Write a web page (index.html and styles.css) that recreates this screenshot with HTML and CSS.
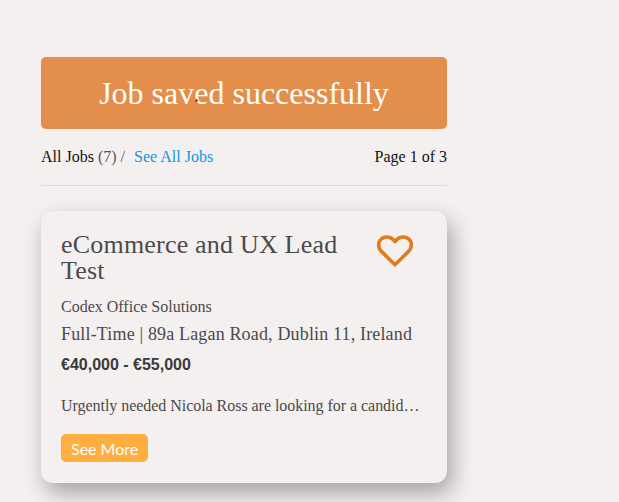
FILE: index.html
```html
<!DOCTYPE html>
<html lang="en">
<head>
  <meta charset="UTF-8" />
  <title>Jobs</title>
  <meta name="viewport" content="width=device-width, initial-scale=1" />
  <link rel="stylesheet" href="styles.css">
</head>
<body>
  <div class="container">
    <div class="alert">
      Job saved successfully
      <span class="alert-dot"></span>
    </div>

    <div class="list-head">
      <div>All Jobs <span class="muted">(7) /</span> <a class="all-link" href="#">See All Jobs</a></div>
      <div>Page 1 of 3</div>
    </div>

    <div class="job-card">
      <div class="job-top">
        <h2 class="job-title">eCommerce and UX Lead Test</h2>
        <svg class="heart" viewBox="0 0 36 32" width="36" height="32" aria-hidden="true">
          <path d="M18 29.8 L4.4 16.4 C0.6 12.4 0.8 7 4.2 4 C7.8 1 13.4 1.4 16.4 4.8 L18 6.6 L19.6 4.8 C22.6 1.4 28.2 1 31.8 4 C35.2 7 35.4 12.4 31.6 16.4 Z" fill="none" stroke="#e07b1f" stroke-width="3.6" stroke-linejoin="round"/>
        </svg>
      </div>
      <p class="company">Codex Office Solutions</p>
      <p class="meta">Full-Time | 89a Lagan Road, Dublin 11, Ireland</p>
      <p class="salary">€40,000 - €55,000</p>
      <p class="desc">Urgently needed Nicola Ross are looking for a candid…</p>
      <a class="more-button" href="#">See More</a>
    </div>
  </div>
</body>
</html>
```

FILE: styles.css
```css
body {
  margin: 0;
  font-family: 'Liberation Serif', serif;
  background: #f5f0f0;
}
.container {
  width: 406px;
  padding: 57px 0 19px 41px;
}
.alert {
  position: relative;
  background: #e38e4a;
  color: white;
  height: 72px;
  line-height: 72px;
  text-align: center;
  font-size: 32px;
  border-radius: 5px;
}
.alert-dot {
  position: absolute;
  left: 154px;
  top: 42px;
  width: 3px;
  height: 3px;
  border-radius: 50%;
  background: #f01818;
}
.list-head {
  display: flex;
  justify-content: space-between;
  margin-top: 19px;
  padding-bottom: 19px;
  border-bottom: 1px solid #dcdcdc;
  font-size: 16px;
  line-height: 18px;
  color: #111;
}
.muted {
  color: #555;
}
.all-link {
  margin-left: 5px;
  color: #0d96e6;
  text-decoration: none;
}
.job-card {
  margin-top: 25px;
  height: 272px;
  box-sizing: border-box;
  padding: 21px 20px 0;
  background: #f5f0f0;
  border-radius: 12px;
  box-shadow: 5px 10px 22px rgba(0,0,0,0.33);
  color: #4a4a4a;
}
.job-top {
  display: flex;
  justify-content: space-between;
  align-items: flex-start;
}
.job-title {
  width: 300px;
  margin: 0;
  font-size: 26px;
  font-weight: normal;
  line-height: 26px;
  letter-spacing: 0.2px;
}
.heart {
  margin: 3px 14px 0 0;
}
.company {
  margin: 14px 0 0;
  font-size: 16px;
  line-height: 18px;
}
.meta {
  margin: 8px 0 0;
  font-size: 18px;
  line-height: 20px;
  letter-spacing: 0.16px;
}
.salary {
  margin: 11px 0 0;
  font-family: 'Liberation Sans', sans-serif;
  font-size: 16px;
  font-weight: bold;
  line-height: 20px;
  color: #3a3a3a;
}
.desc {
  margin: 21px 0 0;
  font-size: 16px;
  line-height: 20px;
  letter-spacing: -0.04px;
  white-space: nowrap;
}
.more-button {
  display: inline-block;
  margin-top: 18px;
  padding: 0 10px;
  height: 28px;
  line-height: 29px;
  background: #ffae3f;
  color: white;
  border-radius: 5px;
  font-family: 'Lato', sans-serif;
  font-size: 16px;
  text-decoration: none;
}
```
